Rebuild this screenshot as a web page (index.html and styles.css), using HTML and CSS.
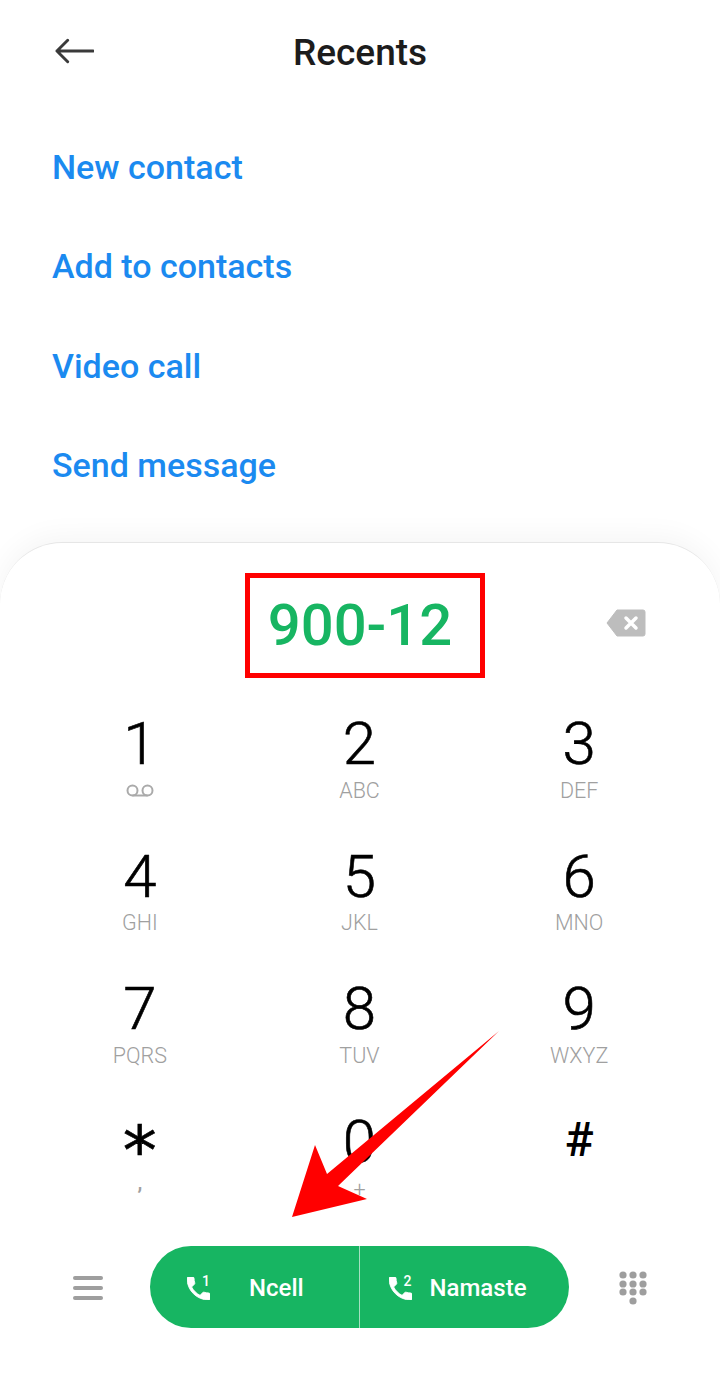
FILE: index.html
```html
<!DOCTYPE html>
<html lang="en">
<head>
  <meta charset="UTF-8">
  <title>Recents</title>
  <link rel="stylesheet" href="styles.css">
</head>
<body>
  <div class="page">
    <header class="topbar">
      <svg class="back" viewBox="0 0 40 26" width="39" height="26">
        <path d="M39 13H2M13 2 2 13l11 11" fill="none" stroke="#3a3a3a" stroke-width="3" stroke-linecap="round" stroke-linejoin="round"/>
      </svg>
      <h1>Recents</h1>
      <span></span>
    </header>

    <ul class="actions">
      <li>New contact</li>
      <li>Add to contacts</li>
      <li>Video call</li>
      <li>Send message</li>
    </ul>

    <section class="sheet">
      <div class="number-row">
        <div class="number-box">900-12</div>
        <svg class="backspace" viewBox="0 0 40 28" width="40" height="28">
          <path d="M11 1h26a2 2 0 0 1 2 2v22a2 2 0 0 1-2 2H11L1 14z" fill="#bdbdbd" stroke="#bdbdbd" stroke-linejoin="round"/>
          <path d="M20 9l10 10M30 9 20 19" stroke="#fff" stroke-width="3.5" stroke-linecap="round"/>
        </svg>
      </div>

      <div class="keypad">
        <div class="key"><span class="digit">1</span>
          <svg class="vm" viewBox="0 0 28 13" width="28" height="13">
            <circle cx="6.5" cy="6.5" r="5" fill="none" stroke="#aaa" stroke-width="2"/>
            <circle cx="21.5" cy="6.5" r="5" fill="none" stroke="#aaa" stroke-width="2"/>
            <path d="M6.5 11.5h15" stroke="#aaa" stroke-width="2"/>
          </svg>
        </div>
        <div class="key"><span class="digit">2</span><span class="letters">ABC</span></div>
        <div class="key"><span class="digit">3</span><span class="letters">DEF</span></div>
        <div class="key"><span class="digit">4</span><span class="letters">GHI</span></div>
        <div class="key"><span class="digit">5</span><span class="letters">JKL</span></div>
        <div class="key"><span class="digit">6</span><span class="letters">MNO</span></div>
        <div class="key"><span class="digit">7</span><span class="letters">PQRS</span></div>
        <div class="key"><span class="digit">8</span><span class="letters">TUV</span></div>
        <div class="key"><span class="digit">9</span><span class="letters">WXYZ</span></div>
        <div class="key"><span class="digit star">*</span><span class="letters comma">,</span></div>
        <div class="key"><span class="digit">0</span><span class="letters plus">+</span></div>
        <div class="key"><span class="digit hash">#</span></div>
      </div>

      <div class="bottom-row">
        <div class="menu"><i></i><i></i><i></i></div>

        <div class="call">
          <div class="sim sim-one">
            <svg class="phone" viewBox="3 3 18 18" width="23" height="23">
              <path d="M6.62 10.79c1.44 2.83 3.76 5.14 6.59 6.59l2.2-2.2c.27-.27.67-.36 1.02-.24 1.12.37 2.33.57 3.57.57.55 0 1 .45 1 1V20c0 .55-.45 1-1 1-9.39 0-17-7.61-17-17 0-.55.45-1 1-1h3.5c.55 0 1 .45 1 1 0 1.25.2 2.45.57 3.57.11.35.03.74-.25 1.02l-2.2 2.2z" fill="#fff" stroke="#fff" stroke-width=".7"/>
            </svg>
            <sup>1</sup>
            <span class="sim-name">Ncell</span>
          </div>
          <div class="sim sim-two">
            <svg class="phone" viewBox="3 3 18 18" width="23" height="23">
              <path d="M6.62 10.79c1.44 2.83 3.76 5.14 6.59 6.59l2.2-2.2c.27-.27.67-.36 1.02-.24 1.12.37 2.33.57 3.57.57.55 0 1 .45 1 1V20c0 .55-.45 1-1 1-9.39 0-17-7.61-17-17 0-.55.45-1 1-1h3.5c.55 0 1 .45 1 1 0 1.25.2 2.45.57 3.57.11.35.03.74-.25 1.02l-2.2 2.2z" fill="#fff" stroke="#fff" stroke-width=".7"/>
            </svg>
            <sup>2</sup>
            <span class="sim-name">Namaste</span>
          </div>
        </div>

        <svg class="dots" viewBox="0 0 28 34" width="28" height="34">
          <g fill="#9e9e9e">
            <circle cx="4" cy="4" r="3.6"/><circle cx="14" cy="4" r="3.6"/><circle cx="24" cy="4" r="3.6"/>
            <circle cx="4" cy="13" r="3.6"/><circle cx="14" cy="13" r="3.6"/><circle cx="24" cy="13" r="3.6"/>
            <circle cx="4" cy="21" r="3.6"/><circle cx="14" cy="21" r="3.6"/><circle cx="24" cy="21" r="3.6"/>
            <circle cx="14" cy="30" r="3.6"/>
          </g>
        </svg>
      </div>
    </section>

    <!-- annotation drawn over the keypad -->
    <svg class="arrow" viewBox="0 0 720 1400" width="720" height="1400">
      <polygon points="499,1031 338,1186 367,1199 292,1217 315,1145 327,1174" fill="#ff0000"/>
    </svg>
  </div>
</body>
</html>
```

FILE: styles.css
```css
* {
  box-sizing: border-box;
}

body {
  margin: 0;
  background: #fff;
  font-family: Roboto, "Liberation Sans", sans-serif;
}

.page {
  position: relative;
  width: 720px;
  height: 1400px;
  overflow: hidden;
}

.topbar {
  display: grid;
  grid-template-columns: 1fr auto 1fr;
  align-items: center;
  height: 104px;
  padding: 0 55px;
}

.topbar h1 {
  margin: 0;
  font-size: 37px;
  font-weight: 500;
  color: #1c1c1c;
}

.back {
  margin-top: -2px;
}

.actions {
  list-style: none;
  margin: 14px 0 27px;
  padding: 0 0 0 52px;
}

.actions li {
  height: 99.3px;
  line-height: 99.3px;
  font-size: 34px;
  font-weight: 500;
  color: #1b8af0;
}

.sheet {
  height: 858px;
  background: #fff;
  border-top: 1px solid #e6e6e6;
  border-radius: 62px 62px 0 0;
  box-shadow: 0 -6px 28px rgba(0, 0, 0, 0.045);
}

.number-row {
  position: relative;
  display: flex;
  justify-content: center;
  padding-top: 30px;
}

.number-box {
  width: 240px;
  height: 105px;
  margin-left: 10px;
  padding-right: 10px;
  border: 5px solid #ff0000;
  text-align: center;
  line-height: 95px;
  font-size: 58px;
  font-weight: 500;
  color: #17b562;
}

.backspace {
  position: absolute;
  left: 606px;
  top: 66px;
}

.keypad {
  display: grid;
  grid-template-columns: repeat(3, 1fr);
  grid-auto-rows: 132.5px;
  margin-top: 36px;
  padding: 0 31px 0 30px;
}

.key {
  display: flex;
  flex-direction: column;
  align-items: center;
}

.digit {
  height: 60px;
  line-height: 60px;
  font-size: 60px;
  font-weight: 300;
  color: #000;
  -webkit-text-stroke: 0.6px #000;
}

.star {
  font-family: "DejaVu Sans", sans-serif;
  font-size: 68px;
  line-height: 77px;
  font-weight: 400;
}

.hash {
  font-size: 48px;
  line-height: 56px;
  font-weight: 500;
  -webkit-text-stroke: 0;
}

.letters {
  margin-top: 4.5px;
  line-height: 24px;
  font-size: 21.5px;
  font-weight: 300;
  color: #a0a0a0;
}

.comma {
  margin-top: -1px;
  font-weight: 500;
}

.plus {
  margin-top: 6px;
}

.vm {
  margin-top: 10px;
}

.bottom-row {
  display: flex;
  align-items: center;
  margin-top: 2px;
  padding: 0 72px;
}

.menu {
  display: flex;
  flex-direction: column;
  gap: 6px;
  width: 30px;
  margin: 2px 47px 0 1px;
}

.menu i {
  display: block;
  height: 4px;
  border-radius: 2px;
  background: #9e9e9e;
}

.call {
  display: flex;
  width: 419px;
  height: 82px;
  border-radius: 41px;
  background: #17b562;
  color: #fff;
}

.sim {
  display: flex;
  align-items: center;
  width: 50%;
  font-size: 24px;
  font-weight: 500;
}

.sim-one {
  padding-left: 37px;
  border-right: 1px solid #a5e0c0;
}

.sim-two {
  padding-left: 29px;
}

.phone {
  margin-top: 3px;
}

.sim sup {
  align-self: flex-start;
  width: 8px;
  margin: 27px 0 0 -8px;
  font-size: 14px;
  line-height: 16px;
}

.sim-name {
  margin-top: 2px;
}

.sim-one .sim-name {
  margin-left: 39px;
}

.sim-two .sim-name {
  margin-left: 18px;
}

.dots {
  margin: 2px 0 0 50px;
}

.arrow {
  position: absolute;
  left: 0;
  top: 0;
  pointer-events: none;
}
```
